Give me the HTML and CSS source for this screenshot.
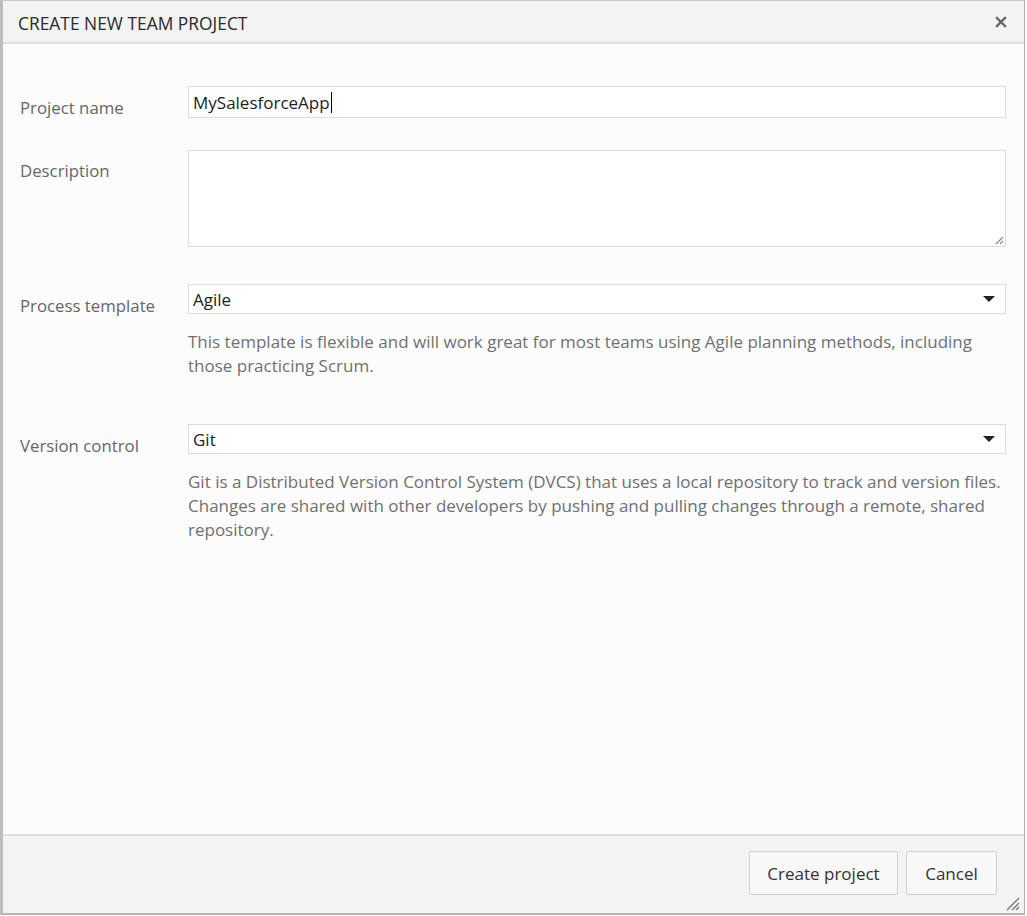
FILE: index.html
```html
<!DOCTYPE html>
<html>
<head>
<meta charset="utf-8">
<link rel="stylesheet" href="styles.css">
</head>
<body>
<div class="dialog">
  <div class="header">
    <span class="title">CREATE NEW TEAM PROJECT</span>
    <span class="close">
      <svg width="12" height="12" viewBox="0 0 12 12"><path d="M2 2 L10 10 M10 2 L2 10" stroke="#666" stroke-width="2.4" stroke-linecap="square"/></svg>
    </span>
  </div>
  <div class="content">
    <div class="row row-name">
      <div class="label">Project name</div>
      <div class="field"><div class="input">MySalesforceApp<span class="caret"></span></div></div>
    </div>
    <div class="row row-desc">
      <div class="label">Description</div>
      <div class="field"><div class="textarea">
        <svg class="grip" width="10" height="10" viewBox="0 0 10 10"><path d="M9 2 L2 9 M9 6 L6 9" stroke="#888" stroke-width="1.2"/></svg>
      </div></div>
    </div>
    <div class="row row-proc">
      <div class="label">Process template</div>
      <div class="field">
        <div class="select">Agile<span class="arrow"></span></div>
        <p class="help">This template is flexible and will work great for most teams using Agile planning methods, including those practicing Scrum.</p>
      </div>
    </div>
    <div class="row row-vc">
      <div class="label">Version control</div>
      <div class="field">
        <div class="select">Git<span class="arrow"></span></div>
        <p class="help">Git is a Distributed Version Control System (DVCS) that uses a local repository to track and version files. Changes are shared with other developers by pushing and pulling changes through a remote, shared repository.</p>
      </div>
    </div>
  </div>
  <div class="footer">
    <button class="btn btn-create">Create project</button>
    <button class="btn btn-cancel">Cancel</button>
    <svg class="corner" width="16" height="16" viewBox="0 0 16 16"><path d="M15 3 L3 15 M15 8 L8 15 M15 12 L12 15" stroke="#777" stroke-width="1.3"/></svg>
  </div>
</div>
</body>
</html>
```
FILE: styles.css
```css
* {
  box-sizing: border-box;
}
html, body {
  margin: 0;
  padding: 0;
  background: #ffffff;
  font-family: "Open Sans", "Noto Sans", sans-serif;
}
.dialog {
  width: 1025px;
  height: 915px;
  border-left: 3px solid #bdbdbd;
  border-right: 1px solid #b0b0b0;
  border-top: 1px solid #c8c8c8;
  border-bottom: 2px solid #b5b5b5;
  background: #fcfcfc;
  display: flex;
  flex-direction: column;
}
.header {
  height: 43px;
  flex: none;
  background: #f3f3f3;
  border-bottom: 2px solid #e0e0e0;
  display: flex;
  align-items: center;
  justify-content: space-between;
  padding: 2px 17px 0 15px;
}
.title {
  font-size: 17.4px;
  color: #2a2a2a;
}
.close {
  display: flex;
  align-items: center;
  margin-top: -2px;
}
.content {
  flex: 1;
  padding: 42px 18px 0 17px;
}
.row {
  display: flex;
}
.label {
  width: 168px;
  flex: none;
  font-size: 16.8px;
  color: #666;
  padding-top: 10px;
}
.field {
  flex: 1;
}
.input, .select, .textarea {
  border: 1px solid #dcdcdc;
  background: #fff;
}
.input {
  height: 32px;
  font-size: 17px;
  color: #222;
  padding: 0 4px;
  display: flex;
  align-items: center;
}
.caret {
  display: inline-block;
  width: 1px;
  height: 21px;
  background: #000;
  margin-left: 1px;
}
.row-desc {
  margin-top: 31px;
}
.row-desc .label {
  padding-top: 9px;
}
.textarea {
  height: 97px;
  position: relative;
}
.grip {
  position: absolute;
  right: 1px;
  bottom: 1px;
}
.row-proc {
  margin-top: 37px;
}
.select {
  height: 30px;
  font-size: 17px;
  color: #222;
  padding: 0 4px;
  display: flex;
  align-items: center;
  justify-content: space-between;
}
.arrow {
  width: 0;
  height: 0;
  border-left: 6px solid transparent;
  border-right: 6px solid transparent;
  border-top: 6px solid #222;
  margin-right: 6px;
}
.help {
  margin: 16px 0 0 0;
  font-size: 17px;
  line-height: 24px;
  color: #707070;
}
.row-vc {
  margin-top: 46px;
}
.footer {
  height: 79px;
  flex: none;
  background: #f3f3f3;
  border-top: 2px solid #e0e0e0;
  display: flex;
  justify-content: flex-end;
  align-items: flex-start;
  padding: 15px 27px 0 0;
  gap: 8px;
  position: relative;
}
.btn {
  height: 44px;
  border: 1px solid #d0d0d0;
  border-radius: 2px;
  background: #f8f8f8;
  font-family: "Open Sans", "Noto Sans", sans-serif;
  font-size: 17px;
  color: #333;
  padding: 0;
}
.btn-create {
  width: 149px;
}
.btn-cancel {
  width: 91px;
}
.corner {
  position: absolute;
  right: 4px;
  bottom: 2px;
}
```
